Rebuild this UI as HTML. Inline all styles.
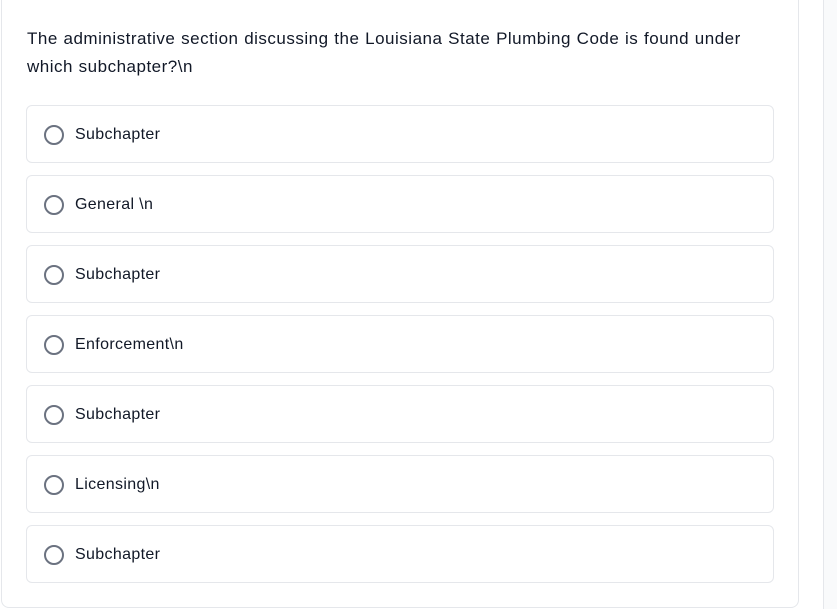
<!DOCTYPE html>
<html><head><style>
body{margin:0;width:837px;height:609px;background:#fff;font-family:"Liberation Sans",Arial,sans-serif;position:relative;overflow:hidden}
.card{position:absolute;left:1px;top:-10px;width:798px;height:618px;border:1px solid #e5e7eb;border-radius:8px;box-sizing:border-box}
.side{position:absolute;left:823px;top:0;width:14px;height:609px;background:#f9fafb;border-left:1px solid #e5e7eb}
.q{position:absolute;left:27px;top:25px;width:750px;font-size:17px;letter-spacing:0.5px;word-spacing:0.5px;line-height:28px;color:#111827}
.opt{position:absolute;left:26px;width:748px;height:58px;border:1px solid #e5e7eb;border-radius:6px;box-sizing:border-box}
.opt i{position:absolute;left:17px;top:19px;width:16px;height:16px;border:2px solid #6b7280;border-radius:50%}
.opt span{position:absolute;left:48px;top:20px;font-size:16px;letter-spacing:0.35px;line-height:18px;color:#111827}
</style></head><body>
<div class="card"></div><div class="side"></div>
<div class="q">The administrative section discussing the Louisiana State Plumbing Code is found under which subchapter?\n</div>
<div class="opt" style="top:105px"><i></i><span>Subchapter</span></div>
<div class="opt" style="top:175px"><i></i><span>General \n</span></div>
<div class="opt" style="top:245px"><i></i><span>Subchapter</span></div>
<div class="opt" style="top:315px"><i></i><span>Enforcement\n</span></div>
<div class="opt" style="top:385px"><i></i><span>Subchapter</span></div>
<div class="opt" style="top:455px"><i></i><span>Licensing\n</span></div>
<div class="opt" style="top:525px"><i></i><span>Subchapter</span></div>
</body></html>
